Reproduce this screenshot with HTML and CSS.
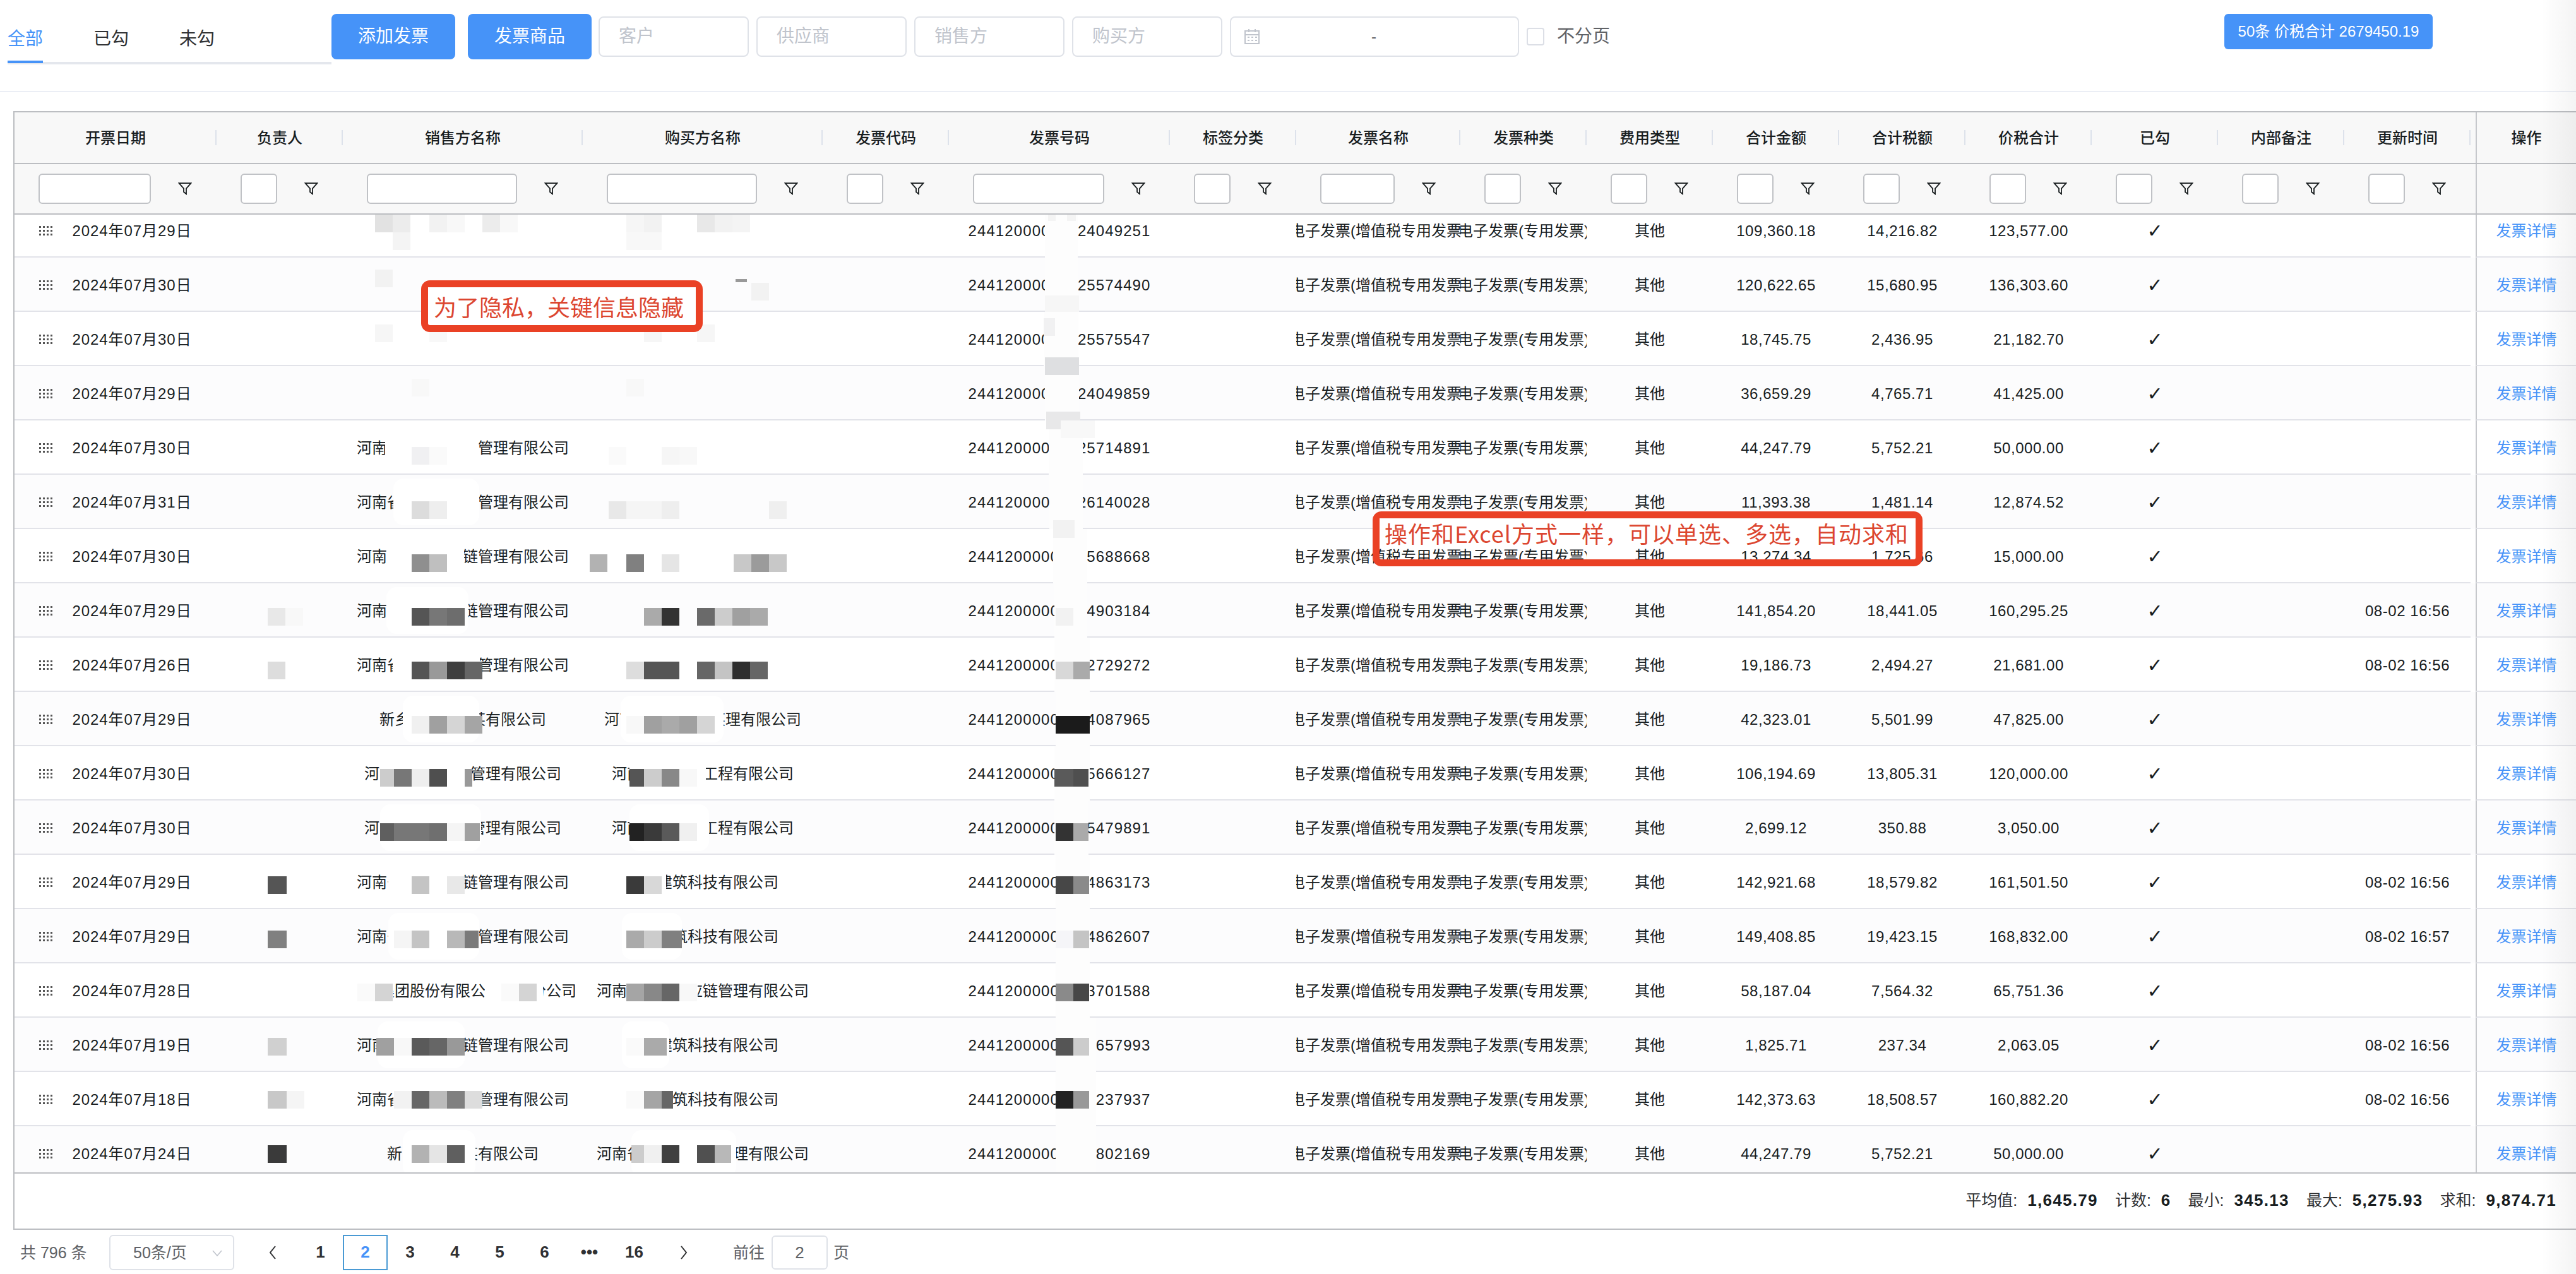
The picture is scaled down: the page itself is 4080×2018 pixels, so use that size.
FILE: index.html
```html
<!DOCTYPE html>
<html lang="zh-CN">
<head>
<meta charset="utf-8">
<title>发票列表</title>
<link rel="stylesheet" href="styles.css">
</head>
<body>
<svg class="defs" aria-hidden="true">
  <symbol id="funnel" viewBox="0 0 22 20"><path d="M1.5 1.2h19L13 9.6v8.6l-4-3.2V9.6z" fill="none" stroke="#181d1f" stroke-width="1.8" stroke-linejoin="miter"/></symbol>
  <symbol id="grip" viewBox="0 0 22 16"><g fill="#555"><rect x="0" y="0" width="3" height="3"/><rect x="6" y="0" width="3" height="3"/><rect x="12" y="0" width="3" height="3"/><rect x="18" y="0" width="3" height="3"/><rect x="0" y="6" width="3" height="3"/><rect x="6" y="6" width="3" height="3"/><rect x="12" y="6" width="3" height="3"/><rect x="18" y="6" width="3" height="3"/><rect x="0" y="12" width="3" height="3"/><rect x="6" y="12" width="3" height="3"/><rect x="12" y="12" width="3" height="3"/><rect x="18" y="12" width="3" height="3"/></g></symbol>
</svg>
<div class="page">
  <header class="topbar">
    <nav class="tabs">
      <a class="tab active">全部</a>
      <a class="tab">已勾</a>
      <a class="tab">未勾</a>
    </nav>
    <button class="btn">添加发票</button>
    <button class="btn">发票商品</button>
    <div class="tools">
      <div class="field">客户</div>
      <div class="field">供应商</div>
      <div class="field">销售方</div>
      <div class="field">购买方</div>
      <div class="field date">
        <svg class="cal" viewBox="0 0 26 26"><path d="M2 4h22v20H2zM2 10h22M8 1v5M18 1v5" fill="none" stroke="#c0c4cc" stroke-width="2"/><path d="M6 14h3M12 14h3M18 14h3M6 19h3M12 19h3M18 19h3" stroke="#c0c4cc" stroke-width="2"/></svg>
        <span class="dash">-</span>
      </div>
      <label class="check"><i class="box"></i>不分页</label>
    </div>
    <div class="total">50条 价税合计 2679450.19</div>
  </header>

  <section class="grid">
    <div class="head" id="head"></div>
    <div class="filters" id="filters"></div>
    <div class="viewport"><div class="rows" id="rows"></div></div>
    <div class="summary">
      <span class="stat">平均值: <b>1,645.79</b></span>
      <span class="stat">计数: <b>6</b></span>
      <span class="stat">最小: <b>345.13</b></span>
      <span class="stat">最大: <b>5,275.93</b></span>
      <span class="stat">求和: <b>9,874.71</b></span>
    </div>
  </section>

  <footer class="pager">
    <span class="count">共 796 条</span>
    <div class="size">50条/页<svg class="caret" viewBox="0 0 16 10"><path d="M1 1l7 8 7-8" fill="none" stroke="#c0c4cc" stroke-width="1.6"/></svg></div>
    <a class="pg prev"><svg viewBox="0 0 12 22"><path d="M10 1L2 11l8 10" fill="none" stroke="#303133" stroke-width="2"/></svg></a>
    <a class="pg">1</a><a class="pg on">2</a><a class="pg">3</a><a class="pg">4</a><a class="pg">5</a><a class="pg">6</a><a class="pg">•••</a><a class="pg">16</a>
    <a class="pg next"><svg viewBox="0 0 12 22"><path d="M2 1l8 10L2 21" fill="none" stroke="#303133" stroke-width="2"/></svg></a>
    <span class="jump">前往</span>
    <div class="goto">2</div>
    <span class="unit">页</span>
  </footer>

  <div class="note note-a"><span>为了隐私，关键信息隐藏</span></div>
  <div class="note note-b"><span>操作和Excel方式一样，可以单选、多选，自动求和</span></div>
  <div class="edge"></div>
</div>
<script src="app.js"></script>
</body>
</html>
```

FILE: styles.css
```css
* { box-sizing: border-box; }
html, body { margin: 0; height: 100%; overflow: hidden; background: #fff; }
body { font: 24px/1.2 "Liberation Sans", "Noto Sans CJK SC", sans-serif; color: #181d1f; }
.defs { display: none; }
.page { position: relative; width: 4080px; height: 2018px; display: flex; flex-direction: column; }

.topbar { height: 146px; flex: none; display: flex; align-items: flex-start; padding: 22px 0 0 12px; border-bottom: 2px solid #ebeef5; }
.tabs { width: 513px; height: 80px; display: flex; gap: 80px; padding-top: 24px; border-bottom: 4px solid #e4e7ed; flex: none; }
.tab { font-size: 28px; line-height: 32px; color: #303133; position: relative; height: 52px; }
.tab.active { color: #4693f8; }
.tab.active::after { content: ""; position: absolute; left: 0; right: 0; bottom: -2px; height: 4px; background: #4693f8; }
.btn { width: 196px; height: 72px; margin-right: 20px; border: 0; border-radius: 8px; background: #4693f8; color: #fff; font: inherit; font-size: 28px; flex: none; }
.tools { display: flex; gap: 12px; margin: 4px 0 0 -9px; align-items: center; }
.field { width: 238px; height: 64px; border: 2px solid #dfe2e8; border-radius: 8px; padding-left: 30px; font-size: 28px; line-height: 60px; color: #c0c4cc; }
.date { width: 458px; padding-left: 20px; display: flex; align-items: center; }
.cal { width: 26px; height: 26px; flex: none; }
.dash { margin-left: 176px; color: #606266; font-size: 24px; }
.check { display: flex; align-items: center; font-size: 28px; color: #606266; }
.box { width: 28px; height: 28px; border: 2px solid #dcdfe6; border-radius: 4px; margin-right: 20px; }
.total { margin-left: auto; margin-right: 227px; width: 330px; height: 56px; border-radius: 6px; background: #4693f8; color: #fff; font-size: 24px; line-height: 56px; text-align: center; }

.grid { margin: 30px 0 0 21px; height: 1772px; flex: none; border: 2px solid #bcbec2; border-width: 2px 0 2px 2px; display: flex; flex-direction: column; background: #fff; }
.head, .filters { display: flex; background: #f8f8f8; border-bottom: 2px solid #bcbec2; flex: none; }
.head { height: 82px; }
.filters { height: 80px; }
.main { display: flex; width: 3890px; flex: none; }
.fixed { margin-left: 8px; border-left: 2px solid #c6c8cc; flex: 1; display: flex; align-items: center; justify-content: center; padding-top: 2px; }
.head .fixed { font-weight: 500; }
.hc { position: relative; display: flex; align-items: center; justify-content: center; font-weight: 500; padding-top: 2px; }
.hc::after { content: ""; position: absolute; right: 0; top: 28px; height: 24px; width: 2px; background: #dde2eb; }
.fc { display: flex; align-items: center; padding: 0 39px 0 38px; }
.fin { flex: 1; min-width: 0; height: 48px; border: 2px solid #c0c2c6; border-radius: 6px; background: #fff; }
.fun { width: 22px; height: 20px; margin-left: 43px; flex: none; }

.viewport { height: 1517px; flex: none; overflow: hidden; }
.rows { margin-top: -18px; }
.row { position: relative; display: flex; height: 86px; background: #fff; }
.row:nth-child(even) { background: #fcfcfd; }
.row .main { border-bottom: 2px solid #e2e3e9; }
.row .fixed { border-bottom: 2px solid #e2e3e9; padding-top: 4px; }
.cell { display: flex; align-items: center; justify-content: center; white-space: nowrap; overflow: hidden; padding-top: 4px; }
.num { letter-spacing: .55px; }
.inv { letter-spacing: 1.1px; }
.day { letter-spacing: .95px; }
.tick { font-family: "DejaVu Sans", sans-serif; font-size: 30px; }
.grip { width: 22px; height: 16px; margin-right: 30px; flex: none; }
.link { color: #4693f8; }
.mask { position: absolute; top: 6px; bottom: 6px; background: #fff; border-radius: 16px; }
.mask.tall { top: 0; bottom: -2px; border-radius: 0; background: #fdfdfd; }
.tile { position: absolute; height: 28px; }
.tile.thin { height: 5px; }

.summary { height: 87px; flex: none; border-top: 2px solid #bcbec2; display: flex; justify-content: flex-end; align-items: center; gap: 27px; padding-right: 31px; }
.stat { font-size: 25px; color: #303133; display: flex; gap: 16px; }
.stat b { font-size: 26px; font-weight: 700; letter-spacing: 1.3px; color: #181d1f; }

.pager { height: 70px; flex: none; display: flex; align-items: center; padding: 2px 0 0 32px; font-size: 25px; color: #606266; }
.count { width: 141px; }
.size { width: 198px; height: 56px; border: 2px solid #dfe2e8; border-radius: 6px; padding-left: 36px; line-height: 52px; position: relative; margin-right: 25px; }
.caret { position: absolute; right: 17px; top: 22px; width: 16px; height: 10px; }
.pg { width: 71px; height: 56px; display: flex; align-items: center; justify-content: center; color: #303133; font-weight: 700; font-size: 26px; }
.pg svg { width: 12px; height: 22px; }
.pg.prev { margin-right: 5px; }
.pg.next { margin-left: 7px; margin-right: 43px; }
.pg.on { border: 2px solid #4a9ad4; color: #4693f8; }
.goto { width: 89px; height: 54px; margin: 0 9px 0 11px; border: 2px solid #dfe2e8; border-radius: 6px; text-align: center; line-height: 50px; font-size: 26px; }

.note { position: absolute; border: 11px solid #ea4125; border-radius: 14px; color: #dc4630; font: 36px/47px "Noto Sans CJK SC", sans-serif; white-space: nowrap; }
.note span { display: block; background: #fff; padding: 0 9px; }
.note-a { left: 667px; top: 444px; width: 446px; height: 82px; background: #fff; }
.note-a span { padding-top: 8px; line-height: 44px; }
.note-b { left: 2174px; top: 810px; width: 871px; height: 87px; }
.note-b span { padding-left: 8px; letter-spacing: 1px; }
.edge { position: absolute; top: 0; right: 0; bottom: 0; width: 56px; background: linear-gradient(to right, rgba(0,0,0,0), rgba(0,0,0,.045)); pointer-events: none; }
```

FILE: app.js
```js
var COLS = [
  ['开票日期', 320], ['负责人', 200], ['销售方名称', 380], ['购买方名称', 380],
  ['发票代码', 200], ['发票号码', 350], ['标签分类', 200], ['发票名称', 260],
  ['发票种类', 200], ['费用类型', 200], ['合计金额', 200], ['合计税额', 200],
  ['价税合计', 200], ['已勾', 200], ['内部备注', 200], ['更新时间', 200]
];
var LEFT = 23;
var S14 = '河南省某某供应链管理有限公司';
var S13 = '河南省某某某某管理有限公司';
var B12 = '河南省某某某工程有限公司';
var B10 = '某某建筑科技有限公司';

// date, invoice suffix, amount, tax, total, time, seller, buyer, masks [from,to], tiles [x,colour,width,y]
var ROWS = [
 ['07月29日','24049251','109,360.18','14,216.82','123,577.00','','','',[[1655,1707]],[[594,'#e2e2e2'],[622,'#ececec'],[680,'#f2f2f2'],[708,'#f8f8f8'],[764,'#ececec'],[792,'#f8f8f8'],[992,'#f6f6f6'],[1020,'#f2f2f2'],[1104,'#e8e8e8'],[1132,'#f2f2f2'],[1160,'#f4f4f4'],[622,'#f4f4f4',28,46],[992,'#f8f8f8',56,46],[1660,'#f4f4f4',12,0],[1690,'#f4f4f4',14,0]]],
 ['07月30日','25574490','120,622.65','15,680.95','136,303.60','','','',[[1655,1707]],[[594,'#f2f2f2'],[1165,'#999999',18,34,1],[1190,'#f2f2f2',28,40],[1655,'#f6f6f6',54,60]]],
 ['07月30日','25575547','18,745.75','2,436.95','21,182.70','','','',[[1653,1708]],[[594,'#f6f6f6'],[680,'#f8f8f8'],[1020,'#f6f6f6'],[1104,'#f6f6f6'],[1653,'#f1f1f2',18,10]]],
 ['07月29日','24049859','36,659.29','4,765.71','41,425.00','','','',[[1655,1709]],[[1655,'#dedfe1',54,-14],[652,'#f8f8f8'],[992,'#f8f8f8']]],
 ['07月30日','25714891','44,247.79','5,752.21','50,000.00','',S14,'',[[610,757],[1661,1715]],[[652,'#f0f0f2'],[680,'#fafafa'],[964,'#fafafa'],[1048,'#f6f6f6'],[1076,'#f8f8f8'],[1657,'#e8e8e9',54,-14],[1680,'#f8f8f8',54,0]]],
 ['07月31日','26140028','11,393.38','1,481.14','12,874.52','',S14,'',[[623,759],[1662,1715]],[[652,'#dcdcdc'],[680,'#eeeeee'],[964,'#e8e8e8'],[992,'#f5f5f5'],[1020,'#f5f5f5'],[1048,'#eeeeee'],[1218,'#efefef']]],
 ['07月30日','5688668','13,274.34','1,725.66','15,000.00','',S14,'',[[612,735],[1668,1722]],[[652,'#8f8f8f'],[680,'#bfbfbf'],[934,'#b2b2b2'],[992,'#808080'],[1048,'#e5e5e5'],[1162,'#c8c8c8'],[1190,'#9b9b9b'],[1218,'#c8c8c8'],[1668,'#f2f2f2',34,-14]]],
 ['07月29日','4903184','141,854.20','18,441.05','160,295.25','08-02 16:56',S14,'',[[612,742],[1670,1722]],[[652,'#555555'],[680,'#777777'],[708,'#6d6d6d'],[1020,'#aaaaaa'],[1048,'#333333'],[1104,'#6a6a6a'],[1132,'#cccccc'],[1160,'#a0a0a0'],[1188,'#aaaaaa'],[424,'#e8e8e8'],[452,'#f8f8f8'],[1672,'#f2f2f2',28]]],
 ['07月26日','2729272','19,186.73','2,494.27','21,681.00','08-02 16:56',S14,'',[[622,760],[1670,1726]],[[652,'#555555'],[680,'#999999'],[708,'#3f3f3f'],[736,'#666666'],[992,'#dddddd'],[1020,'#555555',56],[1104,'#666666'],[1132,'#c4c4c4'],[1160,'#2e2e2e'],[1188,'#666666'],[424,'#dddddd'],[1672,'#d8d8d8'],[1700,'#aaaaaa',26]]],
 ['07月29日','4087965','42,323.01','5,501.99','47,825.00','','新乡市某某某某有限公司','河南省某某某某某理有限公司',[[638,759],[983,1146],[1672,1726]],[[652,'#f0f0f0'],[680,'#a0a0a0'],[708,'#d5d5d5'],[736,'#a5a5a5'],[992,'#f8f8f8'],[1020,'#a0a0a0'],[1048,'#aaaaaa'],[1076,'#a0a0a0'],[1104,'#d5d5d5'],[1672,'#1b1b1b'],[1700,'#1b1b1b',26]]],
 ['07月30日','5666127','106,194.69','13,805.31','120,000.00','',S13,B12,[[602,747],[997,1118],[1670,1726]],[[602,'#cccccc',22],[624,'#777777'],[652,'#eeeeee'],[680,'#4f4f4f'],[736,'#999999',12],[997,'#555555',23],[1020,'#cccccc'],[1048,'#888888'],[1076,'#f8f8f8'],[1670,'#5a5a5a',30],[1700,'#4f4f4f',24]]],
 ['07月30日','5479891','2,699.12','350.88','3,050.00','',S13,B12,[[602,762],[997,1123],[1670,1724]],[[602,'#5f5f5f',22],[624,'#777777'],[652,'#777777'],[680,'#6f6f6f'],[708,'#f5f5f5'],[736,'#a0a0a0',24],[997,'#222222',23],[1020,'#3a3a3a'],[1048,'#5a5a5a'],[1076,'#f0f0f0'],[1672,'#333333'],[1700,'#aaaaaa',24]]],
 ['07月29日','4863173','142,921.68','18,579.82','161,501.50','08-02 16:56',S14,B10,[[615,732],[985,1055],[1672,1726]],[[652,'#c4c4c4'],[708,'#e8e8e8'],[992,'#3a3a3a'],[1020,'#d8d8d8'],[424,'#555555',30],[1672,'#474747'],[1700,'#8a8a8a',25]]],
 ['07月29日','4862607','149,408.85','19,423.15','168,832.00','08-02 16:57',S14,B10,[[615,759],[985,1080],[1672,1726]],[[624,'#f5f5f5'],[652,'#c4c4c4'],[708,'#b8b8b8'],[736,'#7a7a7a',22],[992,'#aaaaaa'],[1020,'#cccccc'],[1048,'#808080',32],[424,'#808080',30],[1672,'#f5f5f8'],[1700,'#c4c4c4',25]]],
 ['07月28日','3701588','58,187.04','7,564.32','65,751.36','','某某集团股份有限公司某某分公司',S14,[[553,623],[768,860],[991,1105],[1672,1726]],[[566,'#fafafa'],[594,'#d4d4d4',28],[794,'#fafafa'],[822,'#d4d4d4'],[992,'#a5a5a5'],[1020,'#888888'],[1048,'#666666'],[1076,'#f8f8f8'],[1672,'#8a8a8a'],[1700,'#474747',25]]],
 ['07月19日','657993','1,825.71','237.34','2,063.05','08-02 16:56',S14,B10,[[598,736],[985,1060],[1672,1736]],[[596,'#a0a0a0'],[624,'#f8f8f8'],[652,'#5a5a5a'],[680,'#666666'],[708,'#999999'],[992,'#fafafa'],[1020,'#aaaaaa',36],[424,'#d0d0d0',30],[1672,'#555555'],[1700,'#cccccc',25]]],
 ['07月18日','237937','142,373.63','18,508.57','160,882.20','08-02 16:56',S14,B10,[[623,753],[985,1066],[1672,1736]],[[624,'#f2f2f2'],[652,'#666666'],[680,'#bbbbbb'],[708,'#808080'],[736,'#dddddd'],[992,'#fafafa'],[1020,'#a5a5a5'],[1048,'#666666',18],[424,'#c8c8c8',30],[454,'#f5f5f5'],[1672,'#222222'],[1700,'#999999',25]]],
 ['07月24日','802169','44,247.79','5,752.21','50,000.00','','新乡市某某某有限公司',S14,[[638,753],[1000,1166],[1672,1736]],[[652,'#b2b2b2'],[680,'#e5e5e5'],[708,'#5f5f5f'],[1000,'#cccccc',20],[1020,'#f0f0f0'],[1048,'#3f3f3f'],[1104,'#505050'],[1132,'#b8b8b8',26],[424,'#3a3a3a',30]]]
];
var TILE_Y = [18,19,20,20,42,42,40,39,38,38,36,36,34,34,32,32,30,30];

function el(tag, cls, text) {
  var n = document.createElement(tag);
  if (cls) n.className = cls;
  if (text) n.textContent = text;
  return n;
}
function useIcon(id, cls) {
  var svg = document.createElementNS('http://www.w3.org/2000/svg', 'svg');
  var use = document.createElementNS('http://www.w3.org/2000/svg', 'use');
  use.setAttribute('href', '#' + id);
  svg.appendChild(use);
  svg.setAttribute('class', cls);
  return svg;
}
function sized(node, w) { node.style.width = w + 'px'; return node; }

var head = document.getElementById('head'), filters = document.getElementById('filters');
var hm = el('div', 'main'), fm = el('div', 'main');
COLS.forEach(function (c) {
  hm.appendChild(sized(el('div', 'hc', c[0]), c[1]));
  var f = sized(el('div', 'fc'), c[1]);
  f.appendChild(el('div', 'fin'));
  f.appendChild(useIcon('funnel', 'fun'));
  fm.appendChild(f);
});
head.appendChild(hm);
head.appendChild(el('div', 'fixed', '操作'));
filters.appendChild(fm);
filters.appendChild(el('div', 'fixed'));

var CLS = { 5: ' inv', 10: ' num', 11: ' num', 12: ' num', 13: ' tick', 15: ' num' };
var rows = document.getElementById('rows');
ROWS.forEach(function (r, i) {
  var row = el('div', 'row'), main = el('div', 'main');
  var no = ('24412000000000000000').slice(0, 20 - r[1].length) + r[1];
  var vals = ['', '', r[6], r[7], '', no, '', '电子发票(增值税专用发票)', '电子发票(专用发票)', '其他', r[2], r[3], r[4], '✓', '', r[5]];
  vals.forEach(function (v, k) {
    var c = sized(el('div', 'cell' + (CLS[k] || ''), v), COLS[k][1]);
    if (k === 0) {
      c.appendChild(useIcon('grip', 'grip'));
      c.appendChild(el('span', 'day', '2024年' + r[0]));
    }
    main.appendChild(c);
  });
  row.appendChild(main);
  row.appendChild(el('div', 'fixed link', '发票详情'));
  r[8].forEach(function (m) {
    var n = el('div', 'mask' + (m[0] > 1500 ? ' tall' : ''));
    n.style.left = (m[0] - LEFT) + 'px';
    n.style.width = (m[1] - m[0]) + 'px';
    row.appendChild(n);
  });
  r[9].forEach(function (t) {
    var n = el('div', 'tile' + (t[4] ? ' thin' : ''));
    n.style.left = (t[0] - LEFT) + 'px';
    n.style.width = (t[2] || 28) + 'px';
    n.style.top = (t[3] === undefined ? TILE_Y[i] : t[3]) + 'px';
    n.style.background = t[1];
    row.appendChild(n);
  });
  rows.appendChild(row);
});
```
